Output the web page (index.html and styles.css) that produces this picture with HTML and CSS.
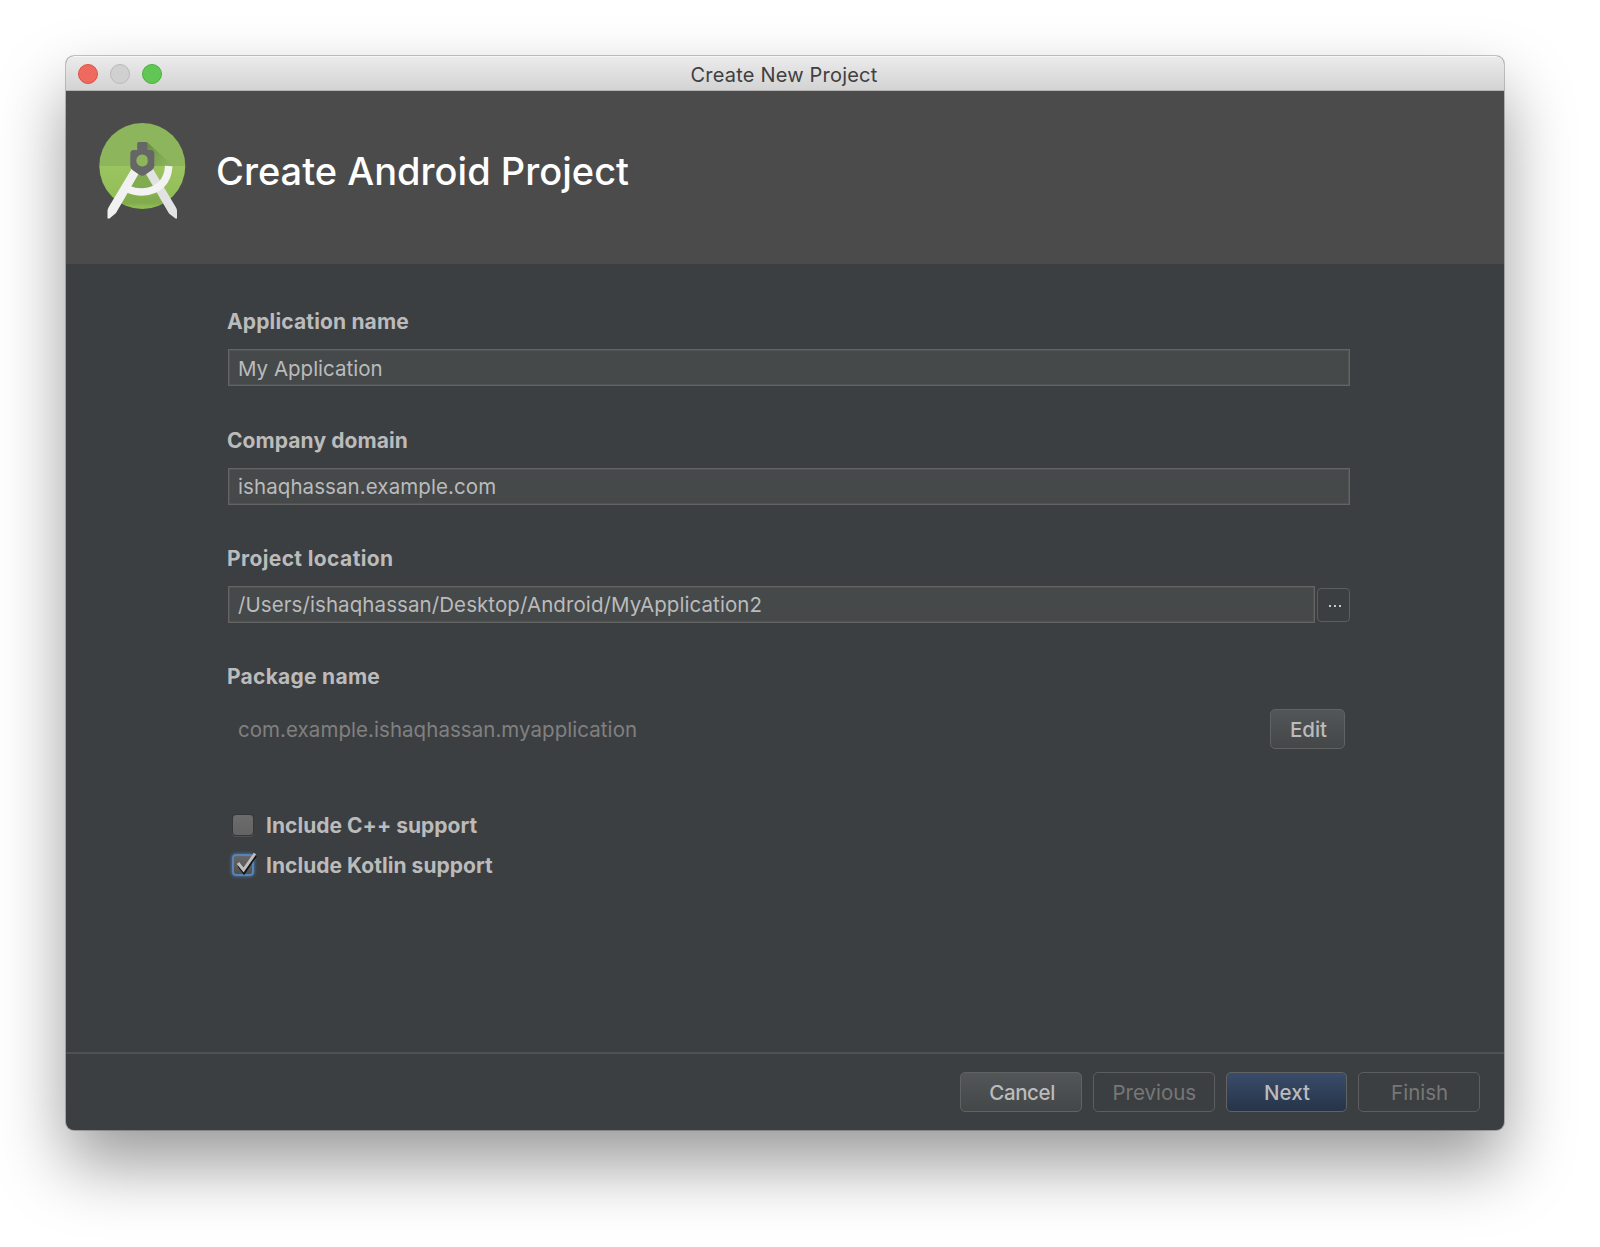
FILE: index.html
```html
<!DOCTYPE html>
<html lang="en">
<head>
<meta charset="utf-8">
<title>Create New Project</title>
<link rel="stylesheet" href="styles.css">
</head>
<body>
<main class="window">
  <div class="titlebar">
    <div class="lights"><span class="light close"></span><span class="light minimize"></span><span class="light expand"></span></div>
    <div class="window-title">Create New Project</div>
  </div>
  <header class="banner">
    <svg class="logo" viewBox="0 0 90 100" width="90" height="100">
      <defs>
        <clipPath id="disc"><circle cx="45.300" cy="45" r="43"/></clipPath>
        <linearGradient id="shade" gradientUnits="userSpaceOnUse" x1="50" y1="28" x2="72" y2="48"><stop offset="0" stop-color="#5c8040" stop-opacity=".7"/><stop offset="1" stop-color="#7ba44e" stop-opacity=".1"/></linearGradient>
        <linearGradient id="lower" x1="0" y1="0" x2="0" y2="1"><stop offset="0" stop-color="#9ac45f"/><stop offset="1" stop-color="#8fbc56"/></linearGradient>
        <filter id="soft"><feGaussianBlur stdDeviation="1.5"/></filter>
      </defs>
      <g clip-path="url(#disc)">
        <rect width="90" height="45" fill="#8db55c"/>
        <rect y="45" width="90" height="45" fill="url(#lower)"/>
        <path d="M50 21L76 45H50Z" fill="url(#shade)"/>
        <g filter="url(#soft)">
          <path d="M37 51L28 68Q45 82 64 66L54 51Z" fill="#628b3b" opacity=".4"/>
          <path d="M30 71L23 84L45 84L68 84L62 71Q46 79 30 71Z" fill="#577d34" opacity=".28"/>
        </g>
      </g>
      <path d="M49 53L56 48L79 86.500Q80 88 80 90V97.500H78.500L72 92.500Z" fill="#e2e2e2"/>
      <path d="M34.500 48L41.500 53L19 92L12.500 97.500H10.500V90Q10.500 88 11.500 86.500Z" fill="#f1f1f1"/>
      <path d="M71.700 45C71 61 61 70.500 45 71Q37 71 31 68" fill="none" stroke="#f3f3f3" stroke-width="7.5"/>
      <path fill="#666" fill-rule="evenodd" d="M41.500 21H49Q50.300 21 50.300 22.500V29H53.500Q57.300 29 57.300 33V45Q57.300 47 55 49L48.500 53.500Q45.300 56 42 53.500L35.500 49Q33.300 47 33.300 45V33Q33.300 29 37 29H40.200V22.500Q40.200 21 41.500 21ZM45.300 33.500A6 6 0 1 0 45.300 45.500A6 6 0 1 0 45.300 33.500Z"/>
    </svg>
    <h1 class="heading">Create Android Project</h1>
  </header>
  <form class="form">
    <section class="field">
      <label class="label t-app">Application name</label>
      <div class="input"><span class="t-myapp">My Application</span></div>
    </section>
    <section class="field">
      <label class="label t-company">Company domain</label>
      <div class="input"><span class="t-domain">ishaqhassan.example.com</span></div>
    </section>
    <section class="field">
      <label class="label t-location">Project location</label>
      <div class="location">
        <div class="input"><span class="t-path">/Users/ishaqhassan/Desktop/Android/MyApplication2</span></div>
        <div class="browse"><svg viewBox="0 0 14 4" width="14" height="4"><path fill="#c8c8c8" d="M1 1h2v2H1zM6 1h2v2H6zM11 1h2v2h-2z"/></svg></div>
      </div>
    </section>
    <section class="field package">
      <label class="label t-package">Package name</label>
      <div class="package-row"><span class="t-pkg">com.example.ishaqhassan.myapplication</span><div class="button edit"><span>Edit</span></div></div>
    </section>
    <div class="checks">
      <div class="check"><span class="box"></span><span class="label t-cpp">Include C++ support</span></div>
      <div class="check"><span class="box checked"><svg viewBox="0 0 30 28" width="30" height="28"><path d="M9 14.5L14 21.500L25.500 4.500" fill="none" stroke="#111" stroke-width="3.2"/><path d="M8 12L13.500 19L25 2.500" fill="none" stroke="#bdbdbd" stroke-width="3"/></svg></span><span class="label t-kotlin">Include Kotlin support</span></div>
    </div>
  </form>
  <footer class="footer">
    <div class="button"><span class="t-cancel">Cancel</span></div>
    <div class="button disabled"><span class="t-prev">Previous</span></div>
    <div class="button primary"><span class="t-next">Next</span></div>
    <div class="button disabled"><span class="t-finish">Finish</span></div>
  </footer>
</main>
</body>
</html>
```
FILE: styles.css
```css
* { box-sizing: border-box; }
body {
  margin: 0;
  height: 1247px;
  padding: 56px 96px 0 66px;
  overflow: hidden;
  background: #fff;
  font-family: Inter, "Liberation Sans", sans-serif;
  font-size: 20.5px;
  line-height: 24px;
  color: #bbb;
  white-space: nowrap;
}
.window {
  display: flex;
  flex-direction: column;
  width: 1438px;
  height: 1074px;
  border-radius: 8px;
  overflow: hidden;
  background: #3c3f41;
  box-shadow: 0 0 0 1px rgba(0, 0, 0, .22), 0 34px 68px rgba(0, 0, 0, .4);
}
.titlebar {
  display: grid;
  grid-template-columns: 1fr auto 1fr;
  align-items: center;
  height: 35px;
  padding: 0 14px 0 12px;
  background: linear-gradient(#ebebeb, #d3d3d3);
  border-top: 1px solid #f7f7f7;
  border-bottom: 1px solid #b4b4b4;
}
.lights { display: flex; gap: 12px; }
.light { width: 20px; height: 20px; border-radius: 50%; border: 1px solid; }
.close { background: #ee6a5f; border-color: #dc5144; }
.minimize { background: #d0d0d0; border-color: #b9b9b9; }
.expand { background: #61c654; border-color: #4bb03c; }
.window-title { padding-top: 2px; font-size: 20px; letter-spacing: .2px; color: #404040; }
.banner {
  display: flex;
  align-items: flex-start;
  height: 173px;
  padding: 30px 0 0 31px;
  gap: 29px;
  background: #4b4b4b;
}
.heading { margin: 27px 0 0; font-size: 38px; line-height: 46px; font-weight: 500; letter-spacing: .02px; color: #fff; }
.form { flex: 1; padding: 46px 154px 0 162px; }
.field { height: 118.3px; }
.label { display: block; font-size: 21px; font-weight: 700; }
.field .label { position: relative; left: -1px; top: .4px; }
.t-app { letter-spacing: .15px; }
.t-company { letter-spacing: .08px; }
.t-location { letter-spacing: .38px; }
.t-package { letter-spacing: .26px; }
.t-cpp, .t-kotlin { letter-spacing: .03px; }
.input {
  display: flex;
  align-items: center;
  flex: 1;
  height: 37px;
  margin-top: 15.3px;
  padding: 2px 0 0 9px;
  background: #45494a;
  border: 1px solid #646464;
  box-shadow: inset 0 0 0 1px #505253;
}
.t-domain, .t-path { letter-spacing: .085px; }
.t-pkg { padding-top: 1px; letter-spacing: .05px; }
.location { display: flex; gap: 2px; }
.browse {
  display: flex;
  align-items: center;
  justify-content: center;
  width: 33px;
  height: 34px;
  margin-top: 17px;
  padding: 3px 0 0 3px;
  border: 1px solid #5b5d5e;
  border-radius: 4px;
}
.package-row { display: flex; justify-content: space-between; align-items: center; padding: 0 5px 0 10px; margin-top: 20.6px; color: #808080; }
.button {
  display: flex;
  align-items: center;
  justify-content: center;
  width: 122px;
  height: 40px;
  padding: 2px 0 0 1px;
  border: 1px solid #616363;
  border-radius: 5px;
  background: linear-gradient(#525658, #434748);
  color: #bbb;
  font-weight: 500;
}
.edit { width: 75px; padding-left: 2px; }
.primary { background: linear-gradient(#394c69, #273449); }
.disabled { background: none; border-color: #5b5d5e; color: #777; font-weight: 400; }
.t-cancel { padding-left: 1px; letter-spacing: -.4px; }
.checks { padding: 23px 0 0 4px; }
.check { display: flex; align-items: center; height: 40px; gap: 12px; }
.box {
  position: relative;
  width: 22px;
  height: 22px;
  margin-bottom: 2px;
  border: 1px solid #353738;
  border-radius: 4px;
  background: linear-gradient(#6c6c6c, #636363);
  box-shadow: 0 1px 0 #515151;
}
.checked { border: 2px solid #5784b8; background: linear-gradient(#666, #505050); box-shadow: 0 0 3px 1px #46678f; }
.checked svg { position: absolute; left: -4px; top: -5px; }
.footer {
  display: flex;
  justify-content: flex-end;
  gap: 11px;
  height: 78px;
  padding: 18px 24px 0 0;
  border-top: 2px solid #505152;
}
.footer .button { width: 121.7px; }
```
